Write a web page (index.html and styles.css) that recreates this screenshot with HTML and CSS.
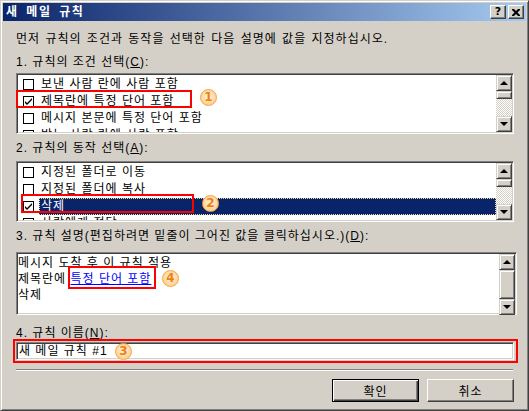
FILE: index.html
```html
<!DOCTYPE html>
<html lang="ko">
<head>
    <meta charset="UTF-8">
    <title>새 메일 규칙</title>
    <link rel="stylesheet" href="styles.css">
</head>
<body>
    <div class="window">
        <div class="titlebar">
            <span class="title">새 메일 규칙</span>
            <div class="title-buttons">
                <span class="tbtn help">?</span>
                <span class="tbtn">
                    <svg width="8" height="7" viewBox="0 0 8 7"><path d="M0 0h2l2 2 2-2h2v1l-2.5 2.5L8 6v1H6L4 5 2 7H0V6l2.5-2.5L0 1z" fill="#000"/></svg>
                </span>
            </div>
        </div>

        <div class="content">
            <p class="intro">먼저 규칙의 조건과 동작을 선택한 다음 설명에 값을 지정하십시오.</p>

            <div class="label label-1">1. 규칙의 조건 선택(<u>C</u>):</div>
            <div class="field">
                <div class="listbox">
                    <div class="items">
                        <div class="item"><span class="check"></span><span class="text">보낸 사람 란에 사람 포함</span></div>
                        <div class="item"><span class="check checked"><svg width="9" height="9" viewBox="0 0 9 9"><path d="M1 4l2 2 5-5v2l-5 5-2-2z" fill="#000"/></svg></span><span class="text">제목란에 특정 단어 포함</span></div>
                        <div class="item"><span class="check"></span><span class="text">메시지 본문에 특정 단어 포함</span></div>
                        <div class="item"><span class="check"></span><span class="text">받는 사람 란에 사람 포함</span></div>
                    </div>
                    <div class="scrollbar">
                        <span class="sb-btn"><span class="arrow up"></span></span>
                        <span class="sb-thumb small"></span>
                        <span class="sb-track"></span>
                        <span class="sb-btn"><span class="arrow down"></span></span>
                    </div>
                </div>
                <span class="redbox mark-1"></span>
                <span class="badge badge-1">1</span>
            </div>

            <div class="label label-2">2. 규칙의 동작 선택(<u>A</u>):</div>
            <div class="field">
                <div class="listbox">
                    <div class="items">
                        <div class="item"><span class="check"></span><span class="text">지정된 폴더로 이동</span></div>
                        <div class="item"><span class="check"></span><span class="text">지정된 폴더에 복사</span></div>
                        <div class="item selected"><span class="check checked"><svg width="9" height="9" viewBox="0 0 9 9"><path d="M1 4l2 2 5-5v2l-5 5-2-2z" fill="#000"/></svg></span><span class="text">삭제</span></div>
                        <div class="item"><span class="check"></span><span class="text">사람에게 전달</span></div>
                    </div>
                    <div class="scrollbar">
                        <span class="sb-btn"><span class="arrow up"></span></span>
                        <span class="sb-thumb small"></span>
                        <span class="sb-track"></span>
                        <span class="sb-btn"><span class="arrow down"></span></span>
                    </div>
                </div>
                <span class="redbox mark-2"></span>
                <span class="badge badge-2">2</span>
            </div>

            <div class="label label-3">3. 규칙 설명(편집하려면 밑줄이 그어진 값을 클릭하십시오.)(<u>D</u>):</div>
            <div class="field">
                <div class="listbox desc">
                    <div class="items lines">
                        <div>메시지 도착 후 이 규칙 적용</div>
                        <div>제목란에 <a class="link" href="#">특정 단어 포함</a></div>
                        <div>삭제</div>
                    </div>
                    <div class="scrollbar">
                        <span class="sb-btn"><span class="arrow up"></span></span>
                        <span class="sb-thumb big"></span>
                        <span class="sb-track"></span>
                        <span class="sb-btn"><span class="arrow down"></span></span>
                    </div>
                </div>
                <span class="redbox mark-4"></span>
                <span class="badge badge-4">4</span>
            </div>

            <div class="label label-4">4. 규칙 이름(<u>N</u>):</div>
            <div class="field">
                <div class="input">새 메일 규칙 #1</div>
                <span class="redbox mark-3"></span>
                <span class="badge badge-3">3</span>
            </div>

            <div class="separator"></div>

            <div class="actions">
                <span class="button default"><span>확인</span></span>
                <span class="button"><span>취소</span></span>
            </div>
        </div>
    </div>
</body>
</html>
```

FILE: styles.css
```css
* {
    margin: 0;
    padding: 0;
    box-sizing: border-box;
}

body {
    font-family: "Liberation Sans", "Noto Sans CJK KR", sans-serif;
    font-size: 12px;
    letter-spacing: 1px;
    color: #000;
    background: #d4d0c8;
}

.window {
    width: 529px;
    height: 411px;
    background: #d4d0c8;
    border: 1px solid;
    border-color: #d4d0c8 #404040 #404040 #d4d0c8;
    box-shadow: inset 1px 1px #fff, inset -1px -1px #808080;
    padding: 2px;
    display: flex;
    flex-direction: column;
}

.titlebar {
    height: 18px;
    flex: none;
    background: linear-gradient(to right, #0a246a, #a6caf0);
    display: flex;
    align-items: center;
    justify-content: space-between;
    padding: 0 2px 0 3px;
}

.title {
    color: #fff;
    font-weight: bold;
    font-size: 12px;
    line-height: 18px;
    letter-spacing: 1.5px;
    word-spacing: 3px;
}

.title-buttons {
    display: flex;
    gap: 2px;
}

.tbtn {
    width: 16px;
    height: 14px;
    background: #d4d0c8;
    border: 1px solid;
    border-color: #fff #404040 #404040 #fff;
    box-shadow: inset -1px -1px #808080;
    display: flex;
    align-items: center;
    justify-content: center;
    font-family: "DejaVu Sans", sans-serif;
    font-weight: bold;
    font-size: 11px;
    letter-spacing: 0;
    line-height: 12px;
}

.content {
    padding-left: 13px;
    display: flex;
    flex-direction: column;
    align-items: flex-start;
}

.intro {
    margin-top: 10px;
    line-height: 16px;
    word-spacing: 1px;
}

.label {
    line-height: 16px;
    white-space: nowrap;
}

.label-1 { margin-top: 7px; }
.label-2 { margin-top: 6px; }
.label-3 { margin-top: 6px; }
.label-4 { margin-top: 10px; }

.field {
    position: relative;
}

.label-1 + .field { margin-top: 3px; }
.label-2 + .field { margin-top: 5px; }
.label-3 + .field { margin-top: 8px; }
.label-4 + .field { margin-top: 1px; }

.listbox {
    width: 498px;
    height: 61px;
    background: #fff;
    border: 1px solid;
    border-color: #808080 #fff #fff #808080;
    box-shadow: inset 1px 1px #404040, inset -1px -1px #d4d0c8;
    padding: 1px;
    display: flex;
}

.listbox.desc {
    width: 501px;
    height: 63px;
}

.items {
    flex: 1;
    overflow: hidden;
    padding-top: 1px;
}

.item {
    height: 17px;
    display: flex;
    align-items: center;
    padding-left: 5px;
    white-space: nowrap;
}

.check {
    width: 11px;
    height: 11px;
    flex: none;
    border: 1px solid #000;
    background: #fff;
    margin-right: 5px;
    display: flex;
    align-items: center;
    justify-content: center;
}

.text {
    flex: 1;
    padding-left: 2px;
    line-height: 17px;
}

.item.selected .text {
    background: #0a246a;
    color: #fff;
    outline: 1px dotted #f0d890;
    outline-offset: -1px;
}

.lines {
    padding-top: 1px;
    line-height: 16px;
    white-space: nowrap;
}

.link {
    color: #0000ff;
    text-decoration: underline;
}

.scrollbar {
    width: 16px;
    flex: none;
    display: flex;
    flex-direction: column;
}

.sb-btn,
.sb-thumb {
    background: #d4d0c8;
    border: 1px solid;
    border-color: #d4d0c8 #404040 #404040 #d4d0c8;
    box-shadow: inset 1px 1px #fff, inset -1px -1px #808080;
    flex: none;
}

.sb-btn {
    height: 16px;
    display: flex;
    align-items: center;
    justify-content: center;
}

.sb-thumb.small { height: 8px; }
.sb-thumb.big { height: 29px; }

.sb-track {
    flex: 1;
    background: repeating-conic-gradient(#d4d0c8 0 25%, #fff 0 50%) 0 0 / 2px 2px;
}

.arrow {
    width: 0;
    height: 0;
    border-left: 4px solid transparent;
    border-right: 4px solid transparent;
}

.arrow.up {
    border-bottom: 4px solid #000;
}

.arrow.down {
    border-top: 4px solid #000;
}

.input {
    width: 498px;
    height: 18px;
    background: #fff;
    border: 1px solid;
    border-color: #808080 #fff #fff #808080;
    box-shadow: inset 1px 1px #404040, inset -1px -1px #d4d0c8;
    padding-left: 2px;
    line-height: 16px;
}

.separator {
    margin-top: 9px;
    width: 497px;
    height: 2px;
    border-top: 1px solid #808080;
    border-bottom: 1px solid #fff;
}

.actions {
    margin-top: 8px;
    margin-left: 316px;
    display: flex;
    gap: 8px;
}

.button {
    width: 87px;
    height: 23px;
    background: #d4d0c8;
    border: 1px solid;
    border-color: #fff #404040 #404040 #fff;
    box-shadow: inset -1px -1px #808080;
    display: flex;
    align-items: center;
    justify-content: center;
}

.button.default {
    border: 1px solid #000;
    box-shadow: inset 1px 1px #fff, inset -1px -1px #404040, inset -2px -2px #808080;
}

/* annotations drawn over the dialog */
.redbox {
    position: absolute;
    border: 2px solid #ff0000;
}

.mark-1 { left: 0; top: 17px; width: 176px; height: 18px; }
.mark-2 { left: 5px; top: 33px; width: 173px; height: 19px; }
.mark-4 { left: 52px; top: 14px; width: 88px; height: 23px; }
.mark-3 { left: -3px; top: -3px; width: 505px; height: 24px; }

.badge {
    position: absolute;
    width: 17px;
    height: 17px;
    border-radius: 50%;
    border: 1px solid #f5a443;
    background: radial-gradient(circle at 50% 45%, #fff6e4 0, #fedcaa 50%, #fbc06c 100%);
    color: #f07f12;
    font-family: "DejaVu Sans", sans-serif;
    font-weight: bold;
    font-size: 12px;
    letter-spacing: 0;
    line-height: 15px;
    text-align: center;
}

.badge-1 { left: 184px; top: 16px; }
.badge-2 { left: 186px; top: 34px; }
.badge-4 { left: 146px; top: 18px; }
.badge-3 { left: 99px; top: 1px; }
```
